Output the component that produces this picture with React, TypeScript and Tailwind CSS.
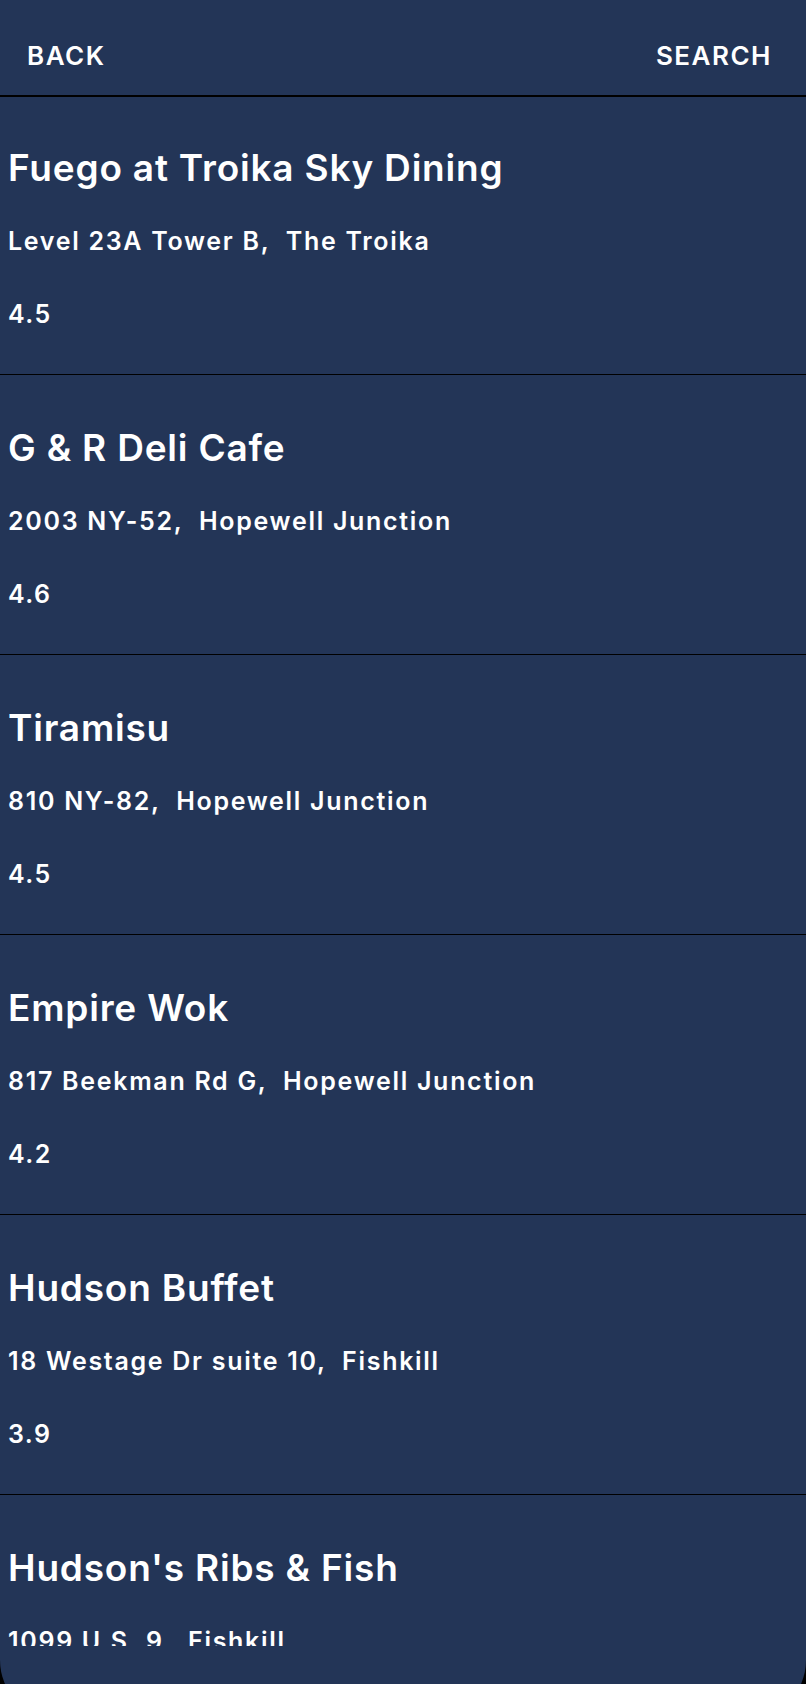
import React from 'react';

interface Place {
  name: string;
  address: string;
  rating?: string;
}

const places: Place[] = [
  { name: 'Fuego at Troika Sky Dining', address: 'Level 23A Tower B,  The Troika', rating: '4.5' },
  { name: 'G & R Deli Cafe', address: '2003 NY-52,  Hopewell Junction', rating: '4.6' },
  { name: 'Tiramisu', address: '810 NY-82,  Hopewell Junction', rating: '4.5' },
  { name: 'Empire Wok', address: '817 Beekman Rd G,  Hopewell Junction', rating: '4.2' },
  { name: 'Hudson Buffet', address: '18 Westage Dr suite 10,  Fishkill', rating: '3.9' },
  { name: "Hudson's Ribs & Fish", address: '1099 U.S. 9,  Fishkill' },
];

const font = "font-['Inter','Roboto',sans-serif]";

const PlaceRow: React.FC<{ place: Place }> = ({ place }) => (
  <div className="h-[280px] shrink-0 border-b border-black px-2 pt-[51px] first:h-[278px] first:pt-[49px]">
    <h2 className="text-[37px] leading-[44px] font-semibold tracking-[0.8px]">{place.name}</h2>
    <p className="mt-[36px] whitespace-pre text-[25px] leading-[30px] font-semibold tracking-[1.7px]">
      {place.address}
    </p>
    {place.rating && (
      <p className="mt-[43px] text-[25px] leading-[30px] font-semibold tracking-[1.5px]">{place.rating}</p>
    )}
  </div>
);

export default function App() {
  return (
    <div className={`h-[1684px] w-[806px] overflow-hidden bg-black ${font}`}>
      <div className="flex h-[1720px] flex-col rounded-b-[60px] bg-[#233557] text-white">
        {/* Nav bar */}
        <div className="flex h-[97px] shrink-0 items-start justify-between border-b-2 border-black pl-[27px] pr-[34px] pt-[40px] text-[26px] leading-[32px] font-semibold tracking-[1.5px]">
          <span>BACK</span>
          <span>SEARCH</span>
        </div>

        {/* List */}
        <div className="flex h-[1549px] shrink-0 flex-col overflow-hidden">
          {places.map((p) => (
            <PlaceRow key={p.name} place={p} />
          ))}
        </div>
      </div>
    </div>
  );
}
